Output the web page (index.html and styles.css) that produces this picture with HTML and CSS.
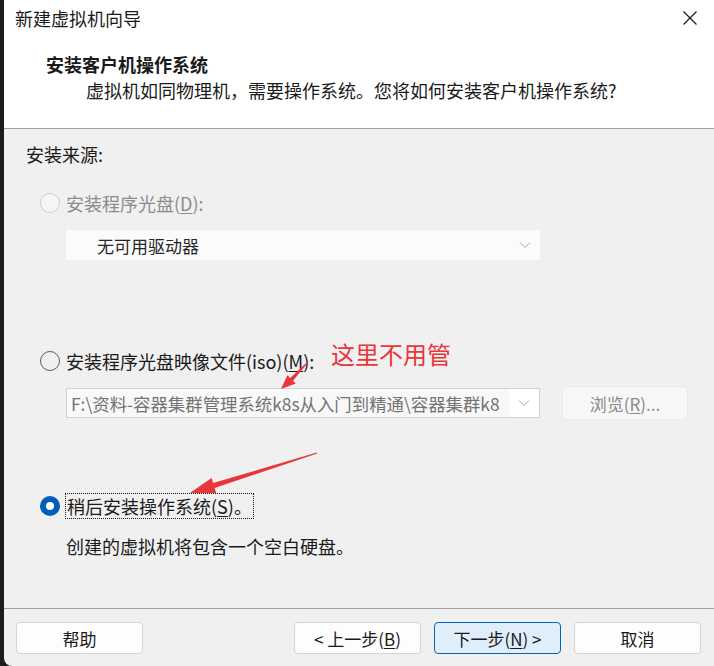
FILE: index.html
```html
<!DOCTYPE html>
<html>
<head>
<meta charset="utf-8">
<title>新建虚拟机向导</title>
<link rel="stylesheet" href="styles.css">
</head>

<body>
<div class="window">
	<div class="titlebar">
		<span class="title">新建虚拟机向导</span>
		<span class="close">
			<svg width="16" height="16" viewBox="0 0 16 16"><path d="M1.5 1.5 L14.5 14.5 M14.5 1.5 L1.5 14.5" stroke="#1a1a1a" stroke-width="1.2" fill="none"/></svg>
		</span>
	</div>

	<div class="header">
		<h1>安装客户机操作系统</h1>
		<p>虚拟机如同物理机，需要操作系统。您将如何安装客户机操作系统?</p>
	</div>

	<div class="content">
		<div class="group_title">安装来源:</div>

		<div class="option option_cd disabled">
			<span class="radio"></span>
			<span class="label">安装程序光盘(<u>D</u>):</span>
		</div>
		<div class="combo combo_drive">
			<span class="combo_text">无可用驱动器</span>
			<span class="chevron"><svg width="12" height="8" viewBox="0 0 12 8"><path d="M1 1.5 L6 6.5 L11 1.5" stroke="#a8a8a8" stroke-width="1" fill="none"/></svg></span>
		</div>

		<div class="option option_iso">
			<span class="radio"></span>
			<span class="label">安装程序光盘映像文件(iso)(<u>M</u>):</span>
		</div>
		<div class="iso_row">
			<div class="combo combo_iso">
				<span class="combo_text">F:\资料-容器集群管理系统k8s从入门到精通\容器集群k8</span>
				<span class="chevron"><svg width="12" height="8" viewBox="0 0 12 8"><path d="M1 1.5 L6 6.5 L11 1.5" stroke="#a8a8a8" stroke-width="1" fill="none"/></svg></span>
			</div>
			<button class="btn btn_browse">浏览(<u>R</u>)...</button>
		</div>

		<div class="option option_later">
			<span class="radio checked"></span>
			<span class="label focus">稍后安装操作系统(<u>S</u>)。</span>
		</div>
		<p class="hint">创建的虚拟机将包含一个空白硬盘。</p>
	</div>

	<div class="footer">
		<button class="btn">帮助</button>
		<span class="spacer"></span>
		<button class="btn">&lt; 上一步(<u>B</u>)</button>
		<button class="btn btn_primary">下一步(<u>N</u>) &gt;</button>
		<button class="btn">取消</button>
	</div>
</div>

<!-- red notes drawn over the screenshot -->
<div class="note">这里不用管</div>
<svg class="arrows" width="714" height="666" viewBox="0 0 714 666">
	<polygon points="306.4,364.4 293,380.8 295.8,383.6 281,389 287.4,375.2 290.2,378 305.6,363.6" fill="#e8363a"/>
	<polygon points="317.2,453.5 214.6,487.9 216.3,493.1 190,493 211.5,477.9 213.1,483.1 316.8,452.5" fill="#e8363a"/>
</svg>
</body>
</html>
```

FILE: styles.css
```css
html,body,div,h1,p,button {margin: 0;padding: 0;}
body {position: relative;width: 714px;height: 666px;overflow: hidden;background: #1c1c1c;font-family: "Noto Sans CJK SC", "Noto Sans", sans-serif;color: #1a1a1a;}
u {text-decoration: underline;text-underline-offset: 2px;}

.window {display: flex;flex-direction: column;height: 666px;margin-left: 4px;background: #f0f0f0;border-bottom-left-radius: 8px;overflow: hidden;}

.titlebar {display: flex;align-items: center;height: 36px;padding-left: 11px;background: #fff;}
.title {font-size: 18px;line-height: 34px;}
.close {display: flex;align-items: center;justify-content: center;width: 48px;height: 36px;margin-left: auto;}

.header {height: 77px;padding: 15px 0 0 42px;background: #fff;border-bottom: 1px solid #a0a0a0;}
.header h1 {font-size: 18px;font-weight: bold;line-height: 26px;}
.header p {margin-left: 40px;font-size: 18px;line-height: 26px;}

.content {flex: 1;padding: 12px 0 0 22px;font-size: 18px;}
.group_title {line-height: 26px;}

.option {display: flex;align-items: center;height: 26px;margin-left: 14px;}
.option .label {margin-left: 6px;line-height: 24px;}
.option.disabled .label {color: #8c8c8c;}
.option_cd {margin-top: 23px;}
.option_iso {margin-top: 88px;}
.option_later {margin-top: 73px;}

.radio {width: 18px;height: 18px;border: 1px solid #5c5c5c;border-radius: 50%;flex: none;}
.disabled .radio {border-color: #cdcdcd;background: #f6f6f6;}
.radio.checked {width: 8px;height: 8px;border: 6px solid #005fb8;background: #fff;}
.focus {padding: 0 1px;outline: 1px dotted #1a1a1a;}

.combo {display: flex;align-items: center;width: 474px;height: 30px;margin-left: 40px;box-sizing: border-box;overflow: hidden;}
.combo_text {flex: 1;white-space: nowrap;overflow: hidden;}
.chevron {display: flex;align-items: center;justify-content: center;width: 30px;height: 28px;flex: none;}
.combo_drive {margin-top: 14px;padding-left: 31px;background: #fbfbfb;font-size: 17px;color: #262626;}
.combo_iso {padding-left: 4px;background: #f8f8f8;border: 1px solid #d2d2d2;font-size: 17.4px;color: #737373;}
.combo_iso .chevron {background: #fff;}

.iso_row {display: flex;align-items: center;height: 34px;margin-top: 12px;}

.btn {width: 127px;height: 32px;border: 1px solid #d3d3d3;border-radius: 4px;background: #fdfdfd;font-family: "Noto Sans CJK SC", "Noto Sans", sans-serif;font-size: 17px;color: #1a1a1a;}
.btn_primary {background: #e0eef9;border-color: #0067c0;}
.btn_browse {width: 126px;height: 34px;margin-left: 22px;background: #f7f7f7;border: 1px solid #ebebeb;color: #8a8a8a;}

.hint {margin: 14px 0 0 40px;line-height: 26px;}

.footer {display: flex;gap: 13px;height: 58px;padding: 13px 13px 0 12px;box-sizing: border-box;border-top: 1px solid #a0a0a0;}
.footer .spacer {flex: 1;}

.note {position: absolute;left: 331px;top: 339px;font-size: 24px;line-height: 30px;color: #e8363a;}
.arrows {position: absolute;left: 0;top: 0;pointer-events: none;}
```
